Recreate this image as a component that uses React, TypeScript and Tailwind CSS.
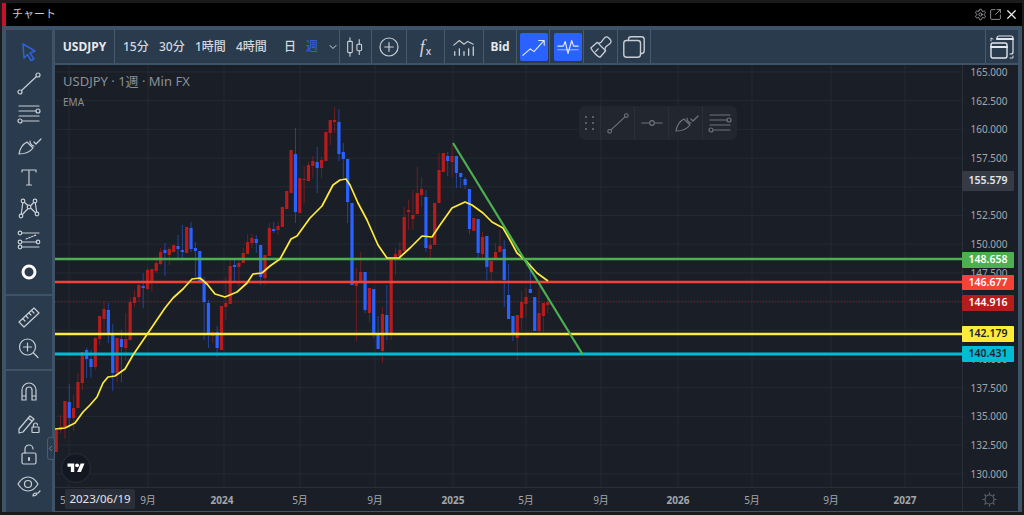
import type { ReactNode } from 'react';
import { Settings, SquareArrowOutUpRight, X, ChevronDown, ChevronLeft } from 'lucide-react';

// [body top, body bottom, wick top, wick bottom, red?]
type Candle = [number, number, number, number, number];
const candles: Candle[] = [
    [430, 452, 430, 452, 1], [427, 430, 415, 433, 1], [401, 428, 401, 439, 1], [402, 418, 384, 428, 0],
    [408, 418, 395, 431, 1], [382, 408, 373, 408, 1], [352, 383, 352, 390, 1], [350, 359, 348, 378, 0],
    [359, 367, 350, 378, 0], [338, 367, 337, 370, 1], [316, 339, 316, 345, 1], [309, 319, 301, 333, 1],
    [310, 335, 303, 343, 0], [334, 373, 324, 391, 0], [338, 373, 338, 382, 1], [339, 347, 330, 382, 0],
    [339, 348, 313, 361, 1], [302, 340, 297, 340, 1], [297, 303, 290, 307, 1], [285, 297, 282, 302, 1],
    [286, 288, 273, 308, 0], [270, 289, 268, 290, 1], [269, 283, 269, 292, 1], [263, 271, 257, 273, 1],
    [252, 264, 248, 265, 1], [250, 253, 243, 276, 0], [249, 255, 247, 265, 1], [245, 252, 245, 252, 1],
    [246, 249, 235, 258, 0], [250, 252, 225, 258, 0], [227, 253, 227, 253, 1], [228, 249, 222, 252, 0],
    [248, 251, 242, 277, 0], [251, 282, 251, 282, 0], [282, 302, 277, 340, 0], [303, 333, 300, 348, 0],
    [332, 336, 332, 343, 1], [332, 348, 326, 357, 0], [306, 350, 306, 350, 1], [303, 307, 277, 320, 1],
    [266, 304, 258, 304, 1], [265, 267, 259, 282, 0], [263, 267, 258, 287, 1], [253, 263, 248, 263, 1],
    [242, 254, 234, 254, 1], [238, 243, 234, 248, 1], [239, 243, 235, 253, 0], [245, 277, 245, 285, 0],
    [255, 278, 255, 285, 1], [228, 256, 223, 256, 1], [229, 231, 222, 233, 0], [226, 230, 222, 235, 1],
    [207, 227, 207, 227, 1], [191, 209, 191, 209, 1], [150, 193, 150, 193, 1], [154, 212, 128, 223, 0],
    [178, 213, 178, 213, 1], [179, 180, 166, 203, 1], [165, 181, 162, 181, 1], [161, 166, 156, 178, 1],
    [162, 168, 147, 193, 0], [160, 168, 157, 178, 1], [132, 161, 132, 161, 1], [120, 133, 120, 145, 1],
    [120, 122, 107, 133, 1], [122, 154, 109, 161, 0], [152, 159, 143, 178, 0], [159, 202, 159, 223, 0],
    [203, 285, 203, 285, 0], [282, 286, 268, 341, 1], [272, 282, 252, 282, 1], [272, 310, 272, 313, 0],
    [288, 313, 288, 322, 1], [289, 333, 289, 338, 0], [333, 349, 316, 349, 0], [314, 351, 307, 363, 1],
    [315, 333, 285, 340, 0], [260, 333, 260, 340, 1], [254, 260, 248, 275, 1], [250, 256, 242, 260, 1],
    [217, 251, 207, 251, 1], [210, 212, 200, 230, 1], [215, 219, 190, 230, 1], [193, 214, 167, 214, 1],
    [189, 195, 177, 207, 1], [197, 248, 190, 252, 0], [245, 249, 237, 260, 1], [203, 245, 203, 245, 1],
    [170, 203, 153, 203, 1], [153, 172, 153, 172, 1], [156, 161, 152, 176, 0], [156, 162, 145, 177, 1],
    [156, 173, 156, 188, 0], [173, 177, 173, 188, 0], [179, 185, 177, 189, 0], [189, 229, 189, 234, 0],
    [218, 231, 218, 231, 1], [219, 253, 219, 258, 0], [237, 254, 232, 260, 1], [236, 267, 236, 280, 0],
    [261, 272, 261, 283, 1], [252, 260, 243, 260, 1], [246, 252, 230, 252, 1], [249, 280, 240, 307, 0],
    [295, 319, 264, 319, 0], [316, 334, 316, 341, 0], [315, 338, 315, 360, 1], [302, 318, 291, 330, 1],
    [297, 304, 288, 317, 1], [289, 293, 262, 293, 0], [297, 331, 297, 331, 0], [313, 331, 287, 335, 1],
    [303, 316, 303, 332, 1], [302, 305, 298, 313, 1],
];

const ema =
    '55,429 65,428 75,423 83,412 90,405 97,397 103,383 108,377 115,376 125,369 133,355 148,333 165,308 173,298 183,289 192,279 200,278 207,284 215,294 225,297 237,292 247,283 253,274 262,273 270,266 280,259 285,250 291,239 297,236 310,218 322,206 333,185 340,180 346,179 350,185 358,203 367,220 378,245 387,258 399,258 410,248 422,236 432,237 440,225 452,208 465,202 472,205 483,213 492,222 503,228 510,240 517,253 527,262 537,273 548,281';

// 145.000 and 142.500 sit fully behind the price badges
const ticks = ['165.000', '162.500', '160.000', '157.500', '155.000', '152.500', '150.000', '147.500', '', '', '140.000', '137.500', '135.000', '132.500', '130.000'];

const gridY = ticks.map((_, i) => 72 + i * 28.7);
const gridX = [69, 148, 224, 300, 375, 453, 526, 601, 678, 752, 831, 905];

const times: { x: number; label: string; bold?: boolean }[] = [
    { x: 148, label: '9月' },
    { x: 222, label: '2024', bold: true },
    { x: 300, label: '5月' },
    { x: 375, label: '9月' },
    { x: 453, label: '2025', bold: true },
    { x: 526, label: '5月' },
    { x: 601, label: '9月' },
    { x: 678, label: '2026', bold: true },
    { x: 752, label: '5月' },
    { x: 831, label: '9月' },
    { x: 905, label: '2027', bold: true },
];

const badges = [
    { y: 171, h: 20, label: '155.579', cls: 'bg-[#363a45] text-[#e4e6eb]' },
    { y: 252, h: 16, label: '148.658', cls: 'bg-[#4caf50] text-white' },
    { y: 275, h: 15, label: '146.677', cls: 'bg-[#f44336] text-white' },
    { y: 295, h: 16, label: '144.916', cls: 'bg-[#b71c1c] text-white' },
    { y: 326, h: 16, label: '142.179', cls: 'bg-[#ffeb3b] text-[#1a1f27]' },
    { y: 346, h: 16, label: '140.431', cls: 'bg-[#00bcd4] text-[#1a1f27]' },
];

const hlines = [
    { y: 259, color: '#4caf50', w: 2.5 },
    { y: 282, color: '#f44336', w: 2.5 },
    { y: 334, color: '#ffeb3b', w: 2.5 },
    { y: 354, color: '#00bcd4', w: 3 },
];

function Ico({ children, size = 28, color = '#c9ced4' }: { children: ReactNode; size?: number; color?: string }) {
    return (
        <svg width={size} height={size} viewBox="0 0 28 28" fill="none" stroke={color} strokeWidth="1.2" strokeLinecap="round" strokeLinejoin="round">
            {children}
        </svg>
    );
}

const lineIcon = (
    <>
        <circle cx="5" cy="23" r="2" />
        <circle cx="23" cy="6" r="2" />
        <path d="M6.5 21.5 21.5 7.5" />
    </>
);
const fibIcon = (
    <>
        <path d="M4 6h20M4 11h17M4 16h20M8 21h16" />
        <circle cx="23" cy="11" r="2" />
        <circle cx="5" cy="21" r="2" />
    </>
);
const brushIcon = (
    <>
        <path d="M4 22c1-6 4-10 8-12l6 6c-3 4-7 6-14 6Z" />
        <path d="M15 9c0 3 2 5 4 5M19 10l2 2 5-5" />
    </>
);

const sideGroups: ReactNode[][] = [
    [
        <Ico color="#2f62d9">
            <path d="M8 7 20 14l-5 2 4 6-3 1.5-3.5-6L9 21Z" strokeWidth="1.5" />
        </Ico>,
        <Ico>{lineIcon}</Ico>,
        <Ico>{fibIcon}</Ico>,
        <Ico>{brushIcon}</Ico>,
        <Ico>
            <path d="M7 9V7h14v2M14 7v15M11.5 22h5" />
        </Ico>,
        <Ico>
            <path d="M6 21 8 6l14 13M6 21 20 6l2 13" />
            <circle cx="6" cy="21" r="1.8" fill="#2a3b4d" />
            <circle cx="8" cy="6" r="1.8" fill="#2a3b4d" />
            <circle cx="14" cy="12" r="1.8" fill="#2a3b4d" />
            <circle cx="20" cy="6" r="1.8" fill="#2a3b4d" />
            <circle cx="22" cy="19" r="1.8" fill="#2a3b4d" />
        </Ico>,
        <Ico>
            <path d="M7 7h17M7 16h15M7 21h17" />
            <path d="M11 13 21 9" strokeDasharray="1.5 1.5" />
            <circle cx="5" cy="7" r="1.8" />
            <circle cx="5" cy="16" r="1.8" />
            <circle cx="5" cy="21" r="1.8" />
            <circle cx="23" cy="16" r="1.8" />
        </Ico>,
        <Ico color="#ffffff">
            <circle cx="14" cy="14" r="6" strokeWidth="3" />
        </Ico>,
    ],
    [
        <Ico>
            <path d="M4 19 19 5l5 5L9 24Z" />
            <path d="M8 16l2 2M11 13l2 2M14 10l2 2M17 8l2 2" />
        </Ico>,
        <Ico>
            <circle cx="12.5" cy="13" r="8" />
            <path d="M12.5 9v8M8.5 13h8M18.5 19l4.5 4.5" />
        </Ico>,
    ],
    [
        <Ico>
            <path d="M7 23V13a7 7 0 0 1 14 0v10h-4V13a3 3 0 0 0-6 0v10ZM7 19h4M17 19h4" />
        </Ico>,
        <Ico>
            <path d="M4 21 15 8l4 3-11 13-4 1ZM13 10l4 3" />
            <rect x="17" y="19" width="7" height="5.5" rx="0.5" />
            <path d="M18.5 19v-2a2 2 0 0 1 4 0" />
        </Ico>,
        <Ico>
            <rect x="7" y="13" width="14" height="11" rx="1.5" />
            <path d="M10 13V9a4 4 0 0 1 8 0" />
            <path d="M14 18v2" strokeWidth="2" />
        </Ico>,
        <Ico>
            <path d="M3 13c3-5 7-7 10-7s7 2 10 7c-3 5-7 7-10 7s-7-2-10-7Z" />
            <circle cx="13" cy="13" r="3.5" />
            <path d="M18 25c0-2 1-3 3-3l1 1c-1 2-2 2-4 2ZM23 22l2-2" />
        </Ico>,
    ],
];

function Cell({ w, children, className = '' }: { w: string; children: ReactNode; className?: string }) {
    return <div className={`${w} shrink-0 h-full flex items-center justify-center border-r border-[#465b70] ${className}`}>{children}</div>;
}

function Toolbar() {
    return (
        <div className="h-[35px] bg-[#2a3b4d] border-b-2 border-[#3e5368] flex items-center text-[#d3d7dc] text-[12px] font-medium">
            <Cell w="w-[60px]">
                <span className="font-bold text-[#e6e8eb]">USDJPY</span>
            </Cell>
            <div className="w-[225px] shrink-0 h-full flex items-center border-r border-[#465b70] pl-[8px]">
                <span className="w-[36px]">15分</span>
                <span className="w-[36px]">30分</span>
                <span className="w-[41px]">1時間</span>
                <span className="w-[48px]">4時間</span>
                <span className="w-[22px]">日</span>
                <span className="w-[21px] text-[#2f62d9]">週</span>
                <ChevronDown size={12} />
            </div>
            <Cell w="w-[32px]">
                <Ico size={26}>
                    <rect x="5" y="8" width="5" height="12" rx="1" />
                    <path d="M7.5 4v4M7.5 20v4M17.5 6v5M17.5 18v4" />
                    <rect x="15" y="11" width="5" height="7" rx="1" />
                </Ico>
            </Cell>
            <Cell w="w-[35px]">
                <Ico size={24}>
                    <circle cx="14" cy="14" r="10.5" strokeWidth="1.4" />
                    <path d="M14 9v10M9 14h10" strokeWidth="1.4" />
                </Ico>
            </Cell>
            <Cell w="w-[38px]">
                <span className="font-['Liberation_Serif',serif] italic text-[18px] leading-none text-[#d3d7dc]">f</span>
                <span className="text-[10px] leading-none mt-[8px] ml-[1px]">x</span>
            </Cell>
            <Cell w="w-[39px]">
                <Ico size={26}>
                    <path d="M3 12l6-5 5 4 4-3 6 3" />
                    <path d="M4 23v-4M9 23v-7M14 23v-4M19 23v-7M24 23v-9" strokeWidth="1.4" />
                </Ico>
            </Cell>
            <Cell w="w-[33px]">
                <span className="font-bold text-[12px] text-[#e6e8eb]">Bid</span>
            </Cell>
            <Cell w="w-[33px]" className="pl-[2px]">
                <div className="w-[28px] h-[28px] bg-[#2962ff] rounded-[2px] flex items-center justify-center">
                    <Ico size={26} color="#e4e9f5">
                        <path d="M2 23 10 16l4 3 10-11M19 7h6v5" />
                    </Ico>
                </div>
            </Cell>
            <Cell w="w-[34px]" className="pl-[3px]">
                <div className="w-[28px] h-[28px] bg-[#2962ff] rounded-[2px] flex items-center justify-center">
                    <Ico size={26} color="#e4e9f5">
                        <path d="M3 13h6l2-5 3 13 4-14 2 6h5" />
                        <path d="M3 17h22" strokeWidth="0.7" />
                    </Ico>
                </div>
            </Cell>
            <Cell w="w-[34px]">
                <Ico size={26}>
                    <path d="M3 15l7-6 9 9-6 7c-2 0-8-6-10-10Z" strokeWidth="1.4" />
                    <path d="M11 10l3-1 4-5c1-1 3-1 4 0l2 2c1 1 1 3 0 4l-5 4-1 3M8 19l3-3" strokeWidth="1.4" />
                </Ico>
            </Cell>
            <Cell w="w-[33px]">
                <Ico size={26}>
                    <rect x="3" y="7" width="18" height="18" rx="3" strokeWidth="1.5" />
                    <path d="M8 7V6a3 3 0 0 1 3-3h11a3 3 0 0 1 3 3v12a3 3 0 0 1-3 3h-1" strokeWidth="1.5" />
                </Ico>
            </Cell>
            <div className="flex-1 h-full border-r border-[#465b70]" />
            <div className="w-[32px] shrink-0 flex items-center justify-center">
                <Ico size={28} color="#e3e6ea">
                    <path d="M9 6V5a2 2 0 0 1 2-2h12a2 2 0 0 1 2 2v14a2 2 0 0 1-2 2h-1" />
                    <path d="M9 6h16" strokeWidth="2" />
                    <rect x="3" y="10" width="16" height="15" rx="2" strokeWidth="1.4" />
                    <path d="M3 14h16" strokeWidth="2" />
                    <path d="M3 8V5l2 1M25 23v2l-3 0" strokeWidth="0.9" />
                </Ico>
            </div>
        </div>
    );
}

function FloatingTools() {
    const color = '#6d7480';
    return (
        <div className="absolute left-[524px] top-[41px] h-[34px] w-[158px] bg-[#21262f] rounded-[6px] flex">
            <div className="w-[22px] flex items-center justify-center border-r border-[#2a3039]">
                <div className="grid grid-cols-2 gap-x-[5px] gap-y-[4px]">
                    {[0, 1, 2, 3, 4, 5].map((d) => (
                        <span key={d} className="w-[2px] h-[2px] bg-[#5a606b]" />
                    ))}
                </div>
            </div>
            <div className="w-[34px] flex items-center justify-center border-r border-[#2a3039]">
                <Ico size={26} color={color}>{lineIcon}</Ico>
            </div>
            <div className="w-[34px] flex items-center justify-center border-r border-[#2a3039]">
                <Ico size={26} color={color}>
                    <path d="M3 14h8M17 14h8" />
                    <circle cx="14" cy="14" r="2.5" />
                </Ico>
            </div>
            <div className="w-[34px] flex items-center justify-center border-r border-[#2a3039]">
                <Ico size={28} color={color}>{brushIcon}</Ico>
            </div>
            <div className="w-[34px] flex items-center justify-center">
                <Ico size={28} color={color}>{fibIcon}</Ico>
            </div>
        </div>
    );
}

function ChartCanvas() {
    return (
        <div className="relative w-[907px] h-full overflow-hidden">
            <svg className="absolute inset-0" width="907" height="422" viewBox="55 65 907 422" fill="none">
                {gridY.map((y) => (
                    <line key={y} x1="55" x2="962" y1={y} y2={y} stroke="#242a33" strokeWidth="1" />
                ))}
                {gridX.map((x) => (
                    <line key={x} x1={x} x2={x} y1="65" y2="487" stroke="#242a33" strokeWidth="1" />
                ))}
                <line x1="55" x2="962" y1="302" y2="302" stroke="#7f1d1d" strokeWidth="1" strokeDasharray="1 2" />
                {candles.map(([top, bottom, wickTop, wickBottom, red], i) => {
                    const x = 56.2 + i * 4.35;
                    const color = red ? '#b71c1c' : '#2962ff';
                    return (
                        <g key={i}>
                            <line x1={x} x2={x} y1={wickTop} y2={wickBottom} stroke={color} strokeOpacity="0.55" strokeWidth="1" />
                            <rect x={x - 1.6} y={top} width="3.2" height={bottom - top} fill={color} />
                        </g>
                    );
                })}
                {hlines.map((l) => (
                    <line key={l.y} x1="55" x2="962" y1={l.y} y2={l.y} stroke={l.color} strokeWidth={l.w} />
                ))}
                <polyline points={ema} stroke="#ffeb3b" strokeWidth="1.7" strokeLinejoin="round" />
                <line x1="453" y1="143" x2="583" y2="355" stroke="#4caf50" strokeWidth="2.2" />
                <g transform="translate(61 453)">
                    <circle cx="15" cy="15" r="14.5" fill="#131722" stroke="#2a2e39" />
                    <g transform="translate(6.5 8.5) scale(0.48)" fill="#ffffff">
                        <path d="M14 22H7V11H0V4h14v18ZM28 22h-8l7.5-18h8L28 22Z" />
                        <circle cx="20" cy="8" r="4" />
                    </g>
                </g>
            </svg>
            <div className="absolute left-[8px] top-[7px] text-[13px] leading-[18px] text-[#8b9097]">USDJPY · 1週 · Min FX</div>
            <div className="absolute left-[8px] top-[30px] text-[10px] leading-[14px] text-[#8b9097]">EMA</div>
            <FloatingTools />
        </div>
    );
}

function PriceAxis() {
    return (
        <div className="relative flex-1 h-full border-l border-[#2a3039]">
            <div className="w-[52px] flex flex-col -mt-[7.5px] pt-[0.5px] text-[10px] text-[#a3a7ad]">
                {ticks.map((t, i) => (
                    <div key={i} className="h-[28.7px] leading-[28.7px] text-center">
                        {t}
                    </div>
                ))}
            </div>
            {badges.map((b) => (
                <div
                    key={b.label}
                    className={`absolute left-[-1px] w-[52px] rounded-[1px] flex items-center justify-center text-[10.5px] font-semibold ${b.cls}`}
                    style={{ top: b.y - 65, height: b.h }}
                >
                    {b.label}
                </div>
            ))}
        </div>
    );
}

function TimeAxis() {
    return (
        <div className="relative h-[24px] flex border-t border-[#2a3039]">
            <div className="relative w-[907px] text-[10px] leading-[24px] text-[#a3a7ad]">
                <span className="absolute left-[5px]">5</span>
                {times.map((t) => (
                    <span
                        key={t.x}
                        className={`absolute -translate-x-1/2 ${t.bold ? 'font-bold' : ''}`}
                        style={{ left: t.x - 55 }}
                    >
                        {t.label}
                    </span>
                ))}
                <div className="absolute left-[10px] top-[1px] w-[70px] h-[20px] bg-[#2a2e39] rounded-[2px] flex items-center justify-center text-[11.5px] text-[#e4e6eb]">
                    2023/06/19
                </div>
            </div>
            <div className="flex-1 border-l border-[#2a3039] flex items-center justify-center pr-[2px]">
                <svg width="15" height="15" viewBox="0 0 15 15" fill="none" stroke="#5d6470" strokeWidth="1.2">
                    <circle cx="7.5" cy="7.5" r="4.5" />
                    <path d="M7.5 0.5v2M7.5 12.5v2M0.5 7.5h2M12.5 7.5h2M2.5 2.5l1.5 1.5M11 11l1.5 1.5M12.5 2.5 11 4M4 11l-1.5 1.5" />
                </svg>
            </div>
        </div>
    );
}

export default function App() {
    return (
        <div className="relative w-[1024px] h-[515px] bg-[#1b1b1b] overflow-hidden font-['Noto_Sans','Noto_Sans_CJK_JP',sans-serif]">
            <div className="h-[3px]" />
            <div className="ml-[2px] mr-[2px] h-[23px] bg-black flex items-center border-l-[4px] border-[#c8102e] pl-[6px] pr-[3px]">
                <span className="text-[11px] text-[#c9ccd0] flex-1">チャート</span>
                <div className="flex items-center gap-[2px] text-[#c4c8cd]">
                    <Settings size={13} strokeWidth={1.3} />
                    <SquareArrowOutUpRight size={13} strokeWidth={1.3} />
                    <X size={15} strokeWidth={2} className="text-[#e6e8eb]" />
                </div>
            </div>
            <div className="ml-[2px] mr-[2px] h-[486px] bg-[#3e5368] pt-[4px] pl-[4px] pr-[4px] flex">
                <div className="w-[46px] h-full bg-[#2a3b4d] shrink-0 flex flex-col">
                    {sideGroups.map((group, g) => (
                        <div key={g} className={`flex flex-col items-center ${g === 0 ? 'pt-[5.5px] pb-[6.5px]' : g === 1 ? 'pt-[5px] pb-[5px] border-y-2 border-[#3e5368]' : 'pt-[4px]'}`}>
                            {group.map((icon, i) => (
                                <div key={i} className="h-[31.5px] flex items-center justify-center">
                                    {icon}
                                </div>
                            ))}
                        </div>
                    ))}
                </div>
                <div className="w-[3px] shrink-0" />
                <div className="flex-1 flex flex-col min-w-0">
                    <Toolbar />
                    <div className="bg-[#1a1f27] flex flex-col">
                        <div className="h-[422px] flex">
                            <ChartCanvas />
                            <PriceAxis />
                        </div>
                        <TimeAxis />
                    </div>
                </div>
            </div>
            <div className="absolute left-[46.5px] top-[437px] w-[8px] h-[23px] rounded-[3px] bg-[#2a3b4d] border border-[#4a5d70] flex items-center justify-center text-[#8d99a6]">
                <ChevronLeft size={9} strokeWidth={2} className="shrink-0" />
            </div>
        </div>
    );
}
